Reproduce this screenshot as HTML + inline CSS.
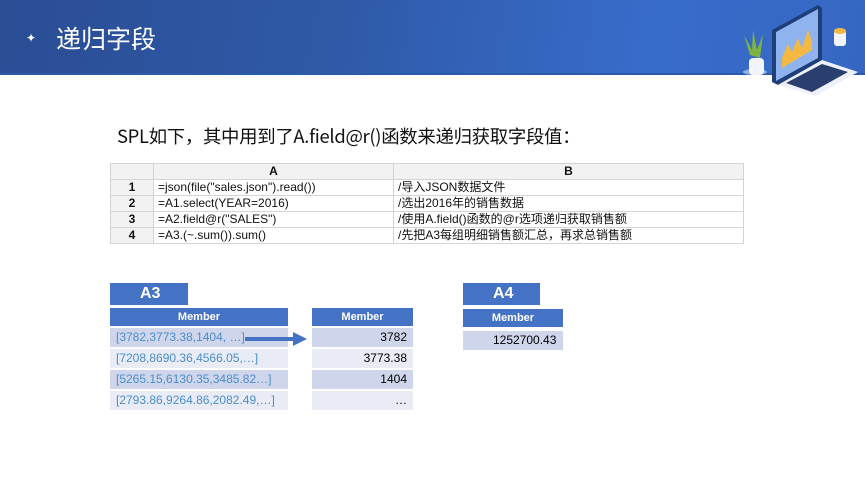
<!DOCTYPE html><html><head><meta charset="utf-8"><style>
*{margin:0;padding:0;box-sizing:border-box}
body{width:865px;height:487px;background:#fff;position:relative;overflow:hidden;font-family:"Liberation Sans","Noto Sans CJK SC",sans-serif}
.hdr{position:absolute;left:0;top:0;width:865px;height:75px;background:linear-gradient(100deg,#2a4d94 0%,#2f5aa8 40%,#386ccb 75%,#3567c2 100%);border-bottom:2px solid #2c5aa8}
.ab{position:absolute}
table{border-collapse:collapse;position:absolute}
.t1{left:110px;top:163px;font-size:12px}
.t1 td{border:1px solid #d4d4d4;height:16px;padding:0 4px;line-height:15px;color:#111}
.t1 .n{width:43px;text-align:center;font-weight:bold;background:#f2f2f2}
.t1 tr:first-child td{background:#f2f2f2;font-weight:bold;text-align:center}
.tab{position:absolute;background:#4472c4;color:#fff;font-weight:bold;font-size:16px;line-height:22px;padding-left:30px;height:22px}
.mh{position:absolute;background:#4472c4;color:#fff;font-weight:bold;font-size:11px;text-align:center;line-height:18px;height:18px}
.r{position:absolute;font-size:12px;line-height:19px;height:19px}
.d{background:#cfd5ea}.l{background:#e9ebf5}
</style></head><body>
<div class="hdr"></div>
<div class="ab" style="left:26px;top:31px;color:#fff;font-size:12px">✦</div>
<div class="ab" style="left:56px;top:21px;color:#fff;font-size:25px;font-family:'Noto Sans CJK SC',sans-serif;line-height:34px">递归字段</div>
<svg class="ab" style="left:730px;top:0" width="135" height="95" viewBox="0 0 135 95">
<ellipse cx="25" cy="72" rx="12" ry="3" fill="#8fb0e6"/>
<path d="M20 55 L14 35 L22 50 L23 30 L27 50 L33 34 L30 58Z" fill="#7cb342"/>
<rect x="19" y="58" width="15" height="17" rx="4" fill="#f2f4fb"/>
<path d="M42 30 L88 5 L92 8 L92 60 L48 85 L42 82Z" fill="#1e3f7a"/>
<path d="M46 32 L88 9 L88 58 L46 81Z" fill="#8fb3ee"/>
<path d="M52 58 L58 44 L62 52 L68 38 L72 48 L78 30 L82 42 L82 50 L52 68Z" fill="#f4b942"/>
<path d="M48 85 L92 60 L128 72 L86 96Z" fill="#eef1fb"/>
<path d="M56 83 L92 64 L118 72 L82 92Z" fill="#2a3f6e"/>
<rect x="104" y="30" width="12" height="16" rx="3" fill="#f2f4fb"/>
<ellipse cx="110" cy="31" rx="6" ry="3" fill="#f4b942"/>
</svg>
<div class="ab" style="left:117px;top:124px;font-size:18.4px;color:#111;font-family:'Noto Sans CJK SC','Liberation Sans',sans-serif;line-height:24px;letter-spacing:-0.3px">SPL如下，其中用到了A.field@r()函数来递归获取字段值：</div>
<table class="t1">
<tr><td class="n"></td><td style="width:240px">A</td><td style="width:350px">B</td></tr>
<tr><td class="n">1</td><td>=json(file("sales.json").read())</td><td>/导入JSON数据文件</td></tr>
<tr><td class="n">2</td><td>=A1.select(YEAR=2016)</td><td>/选出2016年的销售数据</td></tr>
<tr><td class="n">3</td><td>=A2.field@r("SALES")</td><td>/使用A.field()函数的@r选项递归获取销售额</td></tr>
<tr><td class="n">4</td><td>=A3.(~.sum()).sum()</td><td>/先把A3每组明细销售额汇总，再求总销售额</td></tr>
</table>
<div class="tab" style="left:110px;top:283px;width:78px">A3</div>
<div class="mh" style="left:110px;top:308px;width:178px">Member</div>
<div class="r d" style="left:110px;top:328px;width:178px;color:#4a8fcb;padding-left:6px">[3782,3773.38,1404, …]</div>
<div class="r l" style="left:110px;top:349px;width:178px;color:#4a8fcb;padding-left:6px">[7208,8690.36,4566.05,…]</div>
<div class="r d" style="left:110px;top:370px;width:178px;color:#4a8fcb;padding-left:6px">[5265.15,6130.35,3485.82…]</div>
<div class="r l" style="left:110px;top:391px;width:178px;color:#4a8fcb;padding-left:6px">[2793.86,9264.86,2082.49,…]</div>
<div class="mh" style="left:312px;top:308px;width:101px">Member</div>
<div class="r d" style="left:312px;top:328px;width:101px;text-align:right;padding-right:6px">3782</div>
<div class="r l" style="left:312px;top:349px;width:101px;text-align:right;padding-right:6px">3773.38</div>
<div class="r d" style="left:312px;top:370px;width:101px;text-align:right;padding-right:6px">1404</div>
<div class="r l" style="left:312px;top:391px;width:101px;text-align:right;padding-right:6px">…</div>
<svg class="ab" style="left:245px;top:332px" width="62" height="14"><rect x="0" y="5" width="50" height="4" fill="#4472c4"/><path d="M48 0 L62 7 L48 14Z" fill="#4472c4"/></svg>
<div class="tab" style="left:463px;top:283px;width:77px">A4</div>
<div class="mh" style="left:463px;top:309px;width:100px">Member</div>
<div class="r d" style="left:463px;top:331px;width:100px;padding-left:30px">1252700.43</div>
</body></html>
